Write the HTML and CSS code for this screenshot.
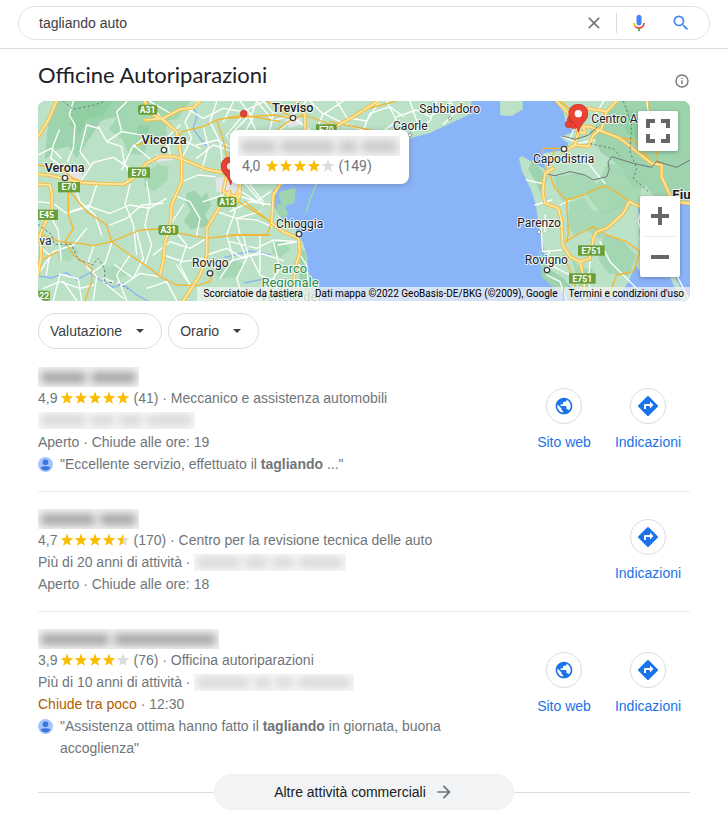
FILE: index.html
```html
<!DOCTYPE html>
<html lang="it">
<head>
<meta charset="utf-8">
<meta name="viewport" content="width=device-width, initial-scale=1">
<title>tagliando auto</title>
<link rel="stylesheet" href="styles.css">
</head>
<body>
<svg class="sprite" aria-hidden="true">
  <defs>
    <linearGradient id="half"><stop offset=".5" stop-color="#fbbc04"/><stop offset=".5" stop-color="#dadce0"/></linearGradient>
    <symbol id="star" viewBox="0 0 24 24"><path d="M12 17.6 18.6 22l-2-7.9L22.6 9l-7.700-.5L12 1 9.100 8.500 1.400 9l6 5.100-2 7.900z"/></symbol>
    <symbol id="globe" viewBox="0 0 24 24"><path d="M12 2C6.480 2 2 6.480 2 12s4.480 10 10 10 10-4.480 10-10S17.520 2 12 2zm-1 17.930c-3.950-.49-7-3.850-7-7.930 0-.62.08-1.210.21-1.790L9 15v1c0 1.100.9 2 2 2v1.930zm6.900-2.540c-.26-.81-1-1.390-1.900-1.390h-1v-3c0-.55-.45-1-1-1H8v-2h2c.55 0 1-.45 1-1V7h2c1.100 0 2-.9 2-2v-.41c2.930 1.190 5 4.060 5 7.410 0 2.080-.8 3.970-2.100 5.390z"/></symbol>
    <symbol id="directions" viewBox="0 0 24 24"><path d="M21.710 11.290l-9-9a.996.996 0 0 0-1.410 0l-9 9a.996.996 0 0 0 0 1.410l9 9c.39.39 1.020.39 1.410 0l9-9a.996.996 0 0 0 0-1.410zM14 14.500V12h-4v3H8v-4c0-.55.45-1 1-1h5V7.500l3.500 3.500-3.500 3.500z"/></symbol>
    <symbol id="person" viewBox="0 0 16 16"><circle cx="8" cy="8" r="8" fill="#a6c5fa"/><circle cx="8" cy="5.600" r="3" fill="#3b74e0"/><path d="M2.500 11.300Q4.800 9.800 8 9.800t5.500 1.500Q11.500 14.300 8 14.300t-5.500-3z" fill="#3b74e0"/></symbol>
    <symbol id="pin" viewBox="0 0 60 86"><path d="M30 1C13 1 1 13 1 30c0 21 24 27 29 55 5-28 29-34 29-55C59 13 47 1 30 1z" fill="#ea4335" stroke="#c5221f" stroke-width="2"/><circle cx="30" cy="29" r="11" fill="#fff"/></symbol>
  </defs>
</svg>

<header class="topbar">
  <form class="search" role="search">
    <input class="search-input" type="text" value="tagliando auto" aria-label="Cerca">
    <button class="icon-button" type="button" aria-label="Cancella"><svg viewBox="0 0 24 24" width="20" height="20" fill="#70757a"><path d="M19 6.410L17.590 5 12 10.590 6.410 5 5 6.410 10.590 12 5 17.590 6.410 19 12 13.410 17.590 19 19 17.590 13.410 12z"/></svg></button>
    <span class="search-divider"></span>
    <button class="icon-button" type="button" aria-label="Ricerca vocale"><svg viewBox="0 0 24 24" width="20" height="20"><path fill="#4285f4" d="M12 15c1.700 0 3-1.300 3-3V5c0-1.700-1.300-3-3-3S9 3.300 9 5v7c0 1.700 1.300 3 3 3z"/><path fill="#34a853" d="M11 18.100h2V22h-2z"/><path fill="#fbbc04" d="M7 12H5c0 1.900.8 3.600 2 4.900l1.500-1.400C7.600 14.600 7 13.400 7 12z"/><path fill="#ea4335" d="M12 17c-1.400 0-2.600-.6-3.500-1.500L7 16.900C8.300 18.200 10 19 12 19c3.900 0 7-3.100 7-7h-2c0 2.800-2.200 5-5 5z"/></svg></button>
    <button class="icon-button" type="submit" aria-label="Cerca"><svg viewBox="0 0 24 24" width="20" height="20" fill="#4285f4"><path d="M15.500 14h-.79l-.28-.27A6.470 6.470 0 0 0 16 9.500 6.500 6.500 0 1 0 9.500 16c1.610 0 3.090-.59 4.230-1.570l.27.28v.79l5 4.990L20.490 19l-4.990-5zm-6 0C7.010 14 5 11.990 5 9.500S7.010 5 9.500 5 14 7.010 14 9.500 11.990 14 9.500 14z"/></svg></button>
  </form>
</header>

<main class="page">
  <div class="heading">
    <h1>Officine Autoriparazioni</h1>
    <button class="info" type="button" aria-label="Informazioni"><svg viewBox="0 0 24 24" width="16" height="16" fill="#70757a"><path d="M11 7h2v2h-2zm0 4h2v6h-2zm1-9a10 10 0 1 0 0 20 10 10 0 0 0 0-20zm0 18a8 8 0 1 1 0-16 8 8 0 0 1 0 16z"/></svg></button>
  </div>

  <section class="map" aria-label="Mappa">
    <svg class="map-canvas" viewBox="0 0 1956 600" preserveAspectRatio="xMidYMid slice">
      <rect width="1956" height="600" fill="#8ab4f8"/>
      <g fill="#bbe2c6">
        <path d="M0 0H1300L1296 40 1240 66 1176 96 1116 112 1000 160 860 220 836 250 800 330 780 350 775 390 795 425 808 470 806 505 840 555 828 600H0z"/>
        <path d="M1386 0h68v25l-32 20-35-2z"/>
        <path d="M1551 0l25 32 10 40 25 20-45 15 25 20-5 20-70 10 5 48-70-40-8 8 10 40 25 50 15 45 10 70 15 65 5 60 60 40 45 42H1740l30-40 26-60h160V0z"/>
      </g>
      <path d="M1801 320L1956 300V600H1746L1776 560 1796 520 1806 440z" fill="#8ab4f8"/>
      <path d="M1906 520l44 80h-20l-34-70zM1801 400l20 0 10 60-20 60-20-30z" fill="#bbe2c6"/>
      <path d="M705 268l80-48 48 28-30 82-14 32-54-5-30-45z" fill="#8ab4f8"/>
      <path d="M725 272l48-12-4 45-34 12-12-25zM716 307l25 7 11 27-20 8-16-14z" fill="#9fd5ae"/>
      <path d="M835 252l-20 45-10 38" stroke="#9fd5ae" stroke-width="5" fill="none"/>
      <g fill="#9ed4ad">
        <path d="M50 0h215l-20 44-55 15-40 60-34 52-26-35-30 8-40 32 10-105z"/>
        <path d="M268 0h190l-40 54-36 6 5 42-50 7-20 52-46-2-18-45-40-28z" opacity=".8"/>
        <path d="M320 218l40-28 32 10-4 38-38 32-32-16z" opacity=".7"/>
        <path d="M446 276l24-8 20 22 16-17 14 40-20 27 20 35-62 10-20-25 20-30-15-29z"/>
        <path d="M702 425l36-5 18 26-28 22-24-9zM530 500l52-32 36 24-20 36-58 6z" opacity=".7"/>
        <path d="M788 440l18 20-4 40 20 34 16 56-28 10-26-70z"/>
        <path d="M1745 0h211v300l-100-5-32-40-36 12-40-70-60-44-34-60z"/>
        <path d="M1470 203l14-26 46 53-22 50-12-31zM1502 440l25 60 54 34 30 66-60-38-40-33z"/>
        <path d="M1547 228l80-12 52 32 30-62 110 18-15 98-50 20-60 20-54-67-60 35-18-30z" opacity=".7"/>
        <path d="M1596 305l44-17 22 42 60-6 30-34 25 30-70 60-20 34-50-30-24 20-27-30z" opacity=".65"/>
        <path d="M1696 400l60 20 40 45-24 60-60-8-30-40zM1600 470l25 30 40 4-10 60-30-10z" opacity=".8"/>
        <path d="M60 440l40-18 22 30-30 30-32-8zM190 500l60-8 20 30-50 20z" opacity=".5"/>
      </g>
      <g fill="#7ec994" opacity=".45"><path d="M105 0h120l-30 44-50 11-20 48-32-35zM300 70l38 5-10 20-34 8zM1765 15l50 40-15 62-38-25z"/></g>
      <g fill="#e3e5e8"><path d="M80 206l46 6 10 20-36 12-22-8zM350 160l55 2-2 16-46 6zM533 230l60-4 22 35-20 40-34-22-26-9zM740 55l46-6 8 20-40 12z"/></g>
      <g fill="none" stroke="#8ab4f8" stroke-width="4">
        <path d="M0 525l40 6 45-16 30 22 40-22 30 22 40 22 30-10 40 32 35 19"/>
        <path d="M465 12l12 35-12 36 25 34 20 20M558 470l80-20 60 12M618 546l70-14M540 475l-60 12"/>
      </g>

      <g class="road-white" transform="translate(-24 -18)">
        <path d="M88 105L70 150 62 190 90 210M130 18L118 60 135 90 130 160 112 200M205 95l25 45 45 15 8 50 22 40M230 140l45-30 70 12M275 110l-15-60 30-30M345 125l-40 35-30 65M24 320l45 5 40 30 70-20 60 20 60-25 60 10 50-30"/>
        <path d="M130 265l20 55 45 40 20 60M200 270l-20 60-60 20M300 268l-15 60 25 60 10 90M350 260l10 60-15 70 20 60-20 60M240 390l50-20 45-40 65-5M170 400l-40 50-60 20-40 60M190 455l-20 60 30 30-10 70M245 445l-20 60-40 30M320 410l20 80-30 60-55-40M300 480l-40 60 30 77M390 545l-60-10-50 35-60-20"/>
        <path d="M455 260l50-20 50 5M455 190l30-60-20-50 35-60M500 150l60-15 50 25M520 95l15 60-20 70M560 20l-20 60 30 60 10 90M610 20l-30 60M640 60l-50 60 20 50M430 300l50 20 30 50-10 50M460 330l-40 60 50 60-20 60 30 60M530 430l-50 30-60-20-50 40M530 480l60-20 50 30 50-20M595 300l20 50-25 70 20 70-40 60M560 350l60 20 70-20M620 420l30 70-30 60 20 60M400 480l60 20 60-10M480 570l-40-60"/>
        <path d="M40 580l50-20 60 20 40-10M70 617l20-80 55 15 10 65M100 560l40 57M24 180l40-20 30 30M24 350l30 0 30 55 10 90M150 262l40-60 60-15 60 40M370 200l-60-50M400 160l50-30 60 30M400 75l-30-35M360 20l70 40M24 450l35 30-10 60M220 560l60 50M350 580l60-20 30 57"/>
        <path d="M470 40l50 30 60-30 60 10 60-30M500 190l50-40 60 20 30-60M620 280l60 40M640 260l60 70M580 300l-60 20M420 180l-10-50 40-40M620 170l60 20M680 20l-20 50 30 60M180 210l-30-40 20-80 35 10"/>
      </g>
      <g class="road-white" transform="translate(576 -18)">
        <path d="M30 18l40 50-30 50M80 18l50 60 60-20 40-40M120 105l10-50-30-37M150 105l40-35 50 35M240 18l40 40 60-40M260 105l20-50 60 30 60 20M320 18l30 50 60 10 40-60M400 105l20-50 60-20 40 30M470 18l30 60-40 30M500 65l60-20 40 20 60-40M540 18l20 60M620 18l-20 60-50 30M660 18l20 30-40 40M0 120l60-60"/>
        <path d="M20 300l60 20 40-30M0 350l60-30 70 10M30 420l-10-50 60 5 45 20M0 440l80 20 50-25 70 5M40 422l15 60 45-5 60 20M0 500l60-20 30 60 50 20M90 422v110M130 440l20 80-40 60M205 440l-60 10M210 480l20 30 5 60M160 520l50-10M60 270l40 50"/>
      </g>
      <g class="road-white" transform="translate(1266 -18)">
        <path d="M310 125l45 20 50-10M200 255l45 10M225 330l50-15M300 330l30-15M243 400l5 70 55-5M375 190l30 40 30 35M255 410l0-50M390 500l-5 60 15 57M420 440l30 60 90 90M560 18l10 60M545 340l-10 40 15 50M260 540l40 20 20 57M330 130l20-50M430 20l-30 50M630 500l55 110M270 470l-20 30 80 40"/>
      </g>

      <g class="road-thin" transform="translate(-24 -18)">
        <path d="M24 415l66 25 60 5 40 7 55-12 85-35 60-3 60 13 80 15 90-10h100M115 290v70l15 40-25 40 25 40 55 40v40l-20 57M245 440l55 40 60 40 30 25 50 25 60 2 40-12 10-30M120 290l50 60 60 40 15 50M320 150l30-8 50-10M455 110l65-15 40-20 80-15 110 20M595 300l45 30 90 55M24 210l66 10 40 30 30 12M455 115l-60 38M560 75l20 60 20 100M600 260l80-20M24 500l60-30"/>
      </g>
      <g class="road-thin" transform="translate(576 -18)">
        <path d="M0 70l60-5 70-5 60 10 35-10 80 30M45 320l80 65-15 35H0M190 70l-80-52M190 70l-50 35M300 80l120 25M395 45l100-25"/>
      </g>
      <g class="road-thin" transform="translate(1266 -18)">
        <path d="M270 240l15 40 35 35 50-15 60-28 30 13 50 35M320 315l5 105-7 20 32-20 50-25 40 25 60 20 40 30-20 60-50 10-30 77M310 480l35 80v57M565 18l10 80 20 100M250 175l0-15 60 0 35-10M285 165l-30 60M300 18l50 40M460 125l60 10 50 60"/>
      </g>
      <g>
        <g class="road-case" transform="translate(-24 -18)">
          <path id="ra" d="M80 18L55 75 24 125M24 238l31 2 95 22 50 3 80 3 30-18 40-45 40-21h40l40 14 60 25 50 10 60 10M24 268l36 2 6 30v40l-21 45-15 35 4 60-10 60M345 18l7 32 48 25 40 35 15 80v70l-30 70-5 70-15 40-5 60-10 40M345 75l55-5 50-27 40-5 20-20M600 290l-40 60-30 50v80l-20 60-50 77M590 240l-10 50 40 15 15-50zM630 240l0 60-15 30"/>
        </g>
        <g class="road-core" transform="translate(-24 -18)"><use href="#ra"/></g>
        <g class="road-case" transform="translate(576 -18)">
          <path id="rb" d="M200 18l25 42v45M445 18l-75 47-80 45M150 268l-20 32-5 85 35 25 45 20 5 40-15 50-5 60"/>
        </g>
        <g class="road-core" transform="translate(576 -18)"><use href="#rb"/></g>
        <g class="road-case" transform="translate(1266 -18)">
          <path id="rc" d="M290 18l40 42 25 50 20 5-5-20 20 0 90 35 50 40 45 35 30 5v35l20 45 15 30 50 5M470 18l-30 32-15 50-25 20-15 35-40-5-35 20M355 110l-10 40M255 235l-7 55 7 35 40 15 10 40 3 70 22 35 30 15 30-10 10-60 10-20 30-10 50-45 18-35 32 15M360 500l12 50 3 67M385 40l55 10M255 235l25-15"/>
        </g>
        <g class="road-core" transform="translate(1266 -18)"><use href="#rc"/></g>
      </g>

      <g fill="none" stroke="#6f7779" stroke-width="3">
        <path d="M1531 220l20 4 45-12 45 10 25 15 40-10 8-22-4-22 11-16 65 20 55 12 15-18 60 18 40-22M1572 105l40 10 38-12 28-25"/>
        <path d="M1756 0l25 72-5 80 20 50-10 30 45 40M1656 128l70 15 20 22M0 370l40 30 10 30 50 0 20 45 45 17 15-20 20 30 0 45 30-4 40 20M75 0l30 25 60-12 40-13" stroke-dasharray="7 7"/>
      </g>

      <g transform="translate(-24 -18)">
        <use href="#pin" x="572" y="185" width="60" height="86"/>
        <circle cx="641" cy="56" r="10" fill="#ea4335" stroke="#c5221f" stroke-width="2"/>
      </g>
      <g transform="translate(1266 -18)">
        <circle cx="332" cy="74" r="10" fill="#ea4335" stroke="#c5221f" stroke-width="2"/>
        <circle cx="326" cy="88" r="10" fill="#ea4335" stroke="#c5221f" stroke-width="2"/>
        <circle cx="341" cy="91" r="10" fill="#ea4335" stroke="#c5221f" stroke-width="2"/>
        <use href="#pin" x="325" y="27" width="60" height="86"/>
      </g>

      <g fill="#fff" stroke="#3c4043" stroke-width="4">
        <circle cx="378" cy="147" r="8"/><circle cx="81" cy="231" r="8"/><circle cx="516" cy="517" r="8"/><circle cx="765" cy="51" r="8"/><circle cx="783" cy="399" r="8"/><circle cx="1578" cy="144" r="8"/><circle cx="1527" cy="507" r="8"/>
      </g>
      <g fill="#fff" stroke="#70757a" stroke-width="2"><circle cx="1116" cy="102" r="5"/><circle cx="1236" cy="52" r="5"/><circle cx="1503" cy="393" r="5"/></g>

      <g fill="#689f38">
        <rect x="300" y="11" width="58" height="30" rx="8"/><rect x="270" y="199" width="66" height="31"/><rect x="60" y="243" width="66" height="31"/><rect x="538" y="288" width="58" height="30" rx="8"/><rect x="361" y="372" width="60" height="30" rx="8"/><rect x="-6" y="326" width="66" height="31"/><rect x="-14" y="569" width="50" height="30" rx="8"/><rect x="834" y="70" width="62" height="31"/><rect x="1620" y="433" width="80" height="31"/><rect x="1593" y="517" width="80" height="31"/>
      </g>
      <g class="shield">
        <text x="329" y="35">A31</text><text x="303" y="224">E70</text><text x="93" y="268">E70</text><text x="567" y="312">A13</text><text x="391" y="396">A31</text><text x="26" y="351">E45</text><text x="10" y="593">A22</text><text x="865" y="95">E70</text><text x="1660" y="458">E751</text><text x="1633" y="542">E751</text>
      </g>
      <g class="city">
        <text x="378" y="128">Vicenza</text><text x="80" y="212">Verona</text><text x="764" y="34">Treviso</text>
      </g>
      <g class="town">
        <text x="517" y="499">Rovigo</text><text x="785" y="380">Chioggia</text><text x="1117" y="86">Caorle</text><text x="1235" y="37">Sabbiadoro</text><text x="1577" y="186">Capodistria</text><text x="1503" y="377">Parenzo</text><text x="1525" y="488">Rovigno</text><text class="from-left" x="1660" y="66">Centro A</text><text class="from-left" x="4" y="431">va</text>
      </g>
      <g class="park"><text x="757" y="516">Parco</text><text x="756" y="558">Regionale</text><text x="756" y="600">Veneto del</text></g>
      <text class="capital from-left" x="1903" y="295">Fiume</text>
    </svg>

    <div class="callout">
      <div class="blurred name-callout" aria-hidden="true"><i class="w-mid"></i><i class="w-long"></i><i class="w-short"></i><i class="w-mid"></i></div>
      <div class="callout-rating"><span>4,0</span><span class="stars"><svg><use href="#star"/></svg><svg><use href="#star"/></svg><svg><use href="#star"/></svg><svg><use href="#star"/></svg><svg class="off"><use href="#star"/></svg></span><span>(149)</span></div>
    </div>
    <button class="map-button fullscreen" type="button" aria-label="Schermo intero"><svg viewBox="0 0 24 24" width="24" height="24" fill="none" stroke="#666" stroke-width="4"><path d="M2 9V2h7M15 2h7v7M22 15v7h-7M9 22H2v-7"/></svg></button>
    <div class="zoom">
      <button class="zoom-button" type="button" aria-label="Zoom avanti"><svg viewBox="0 0 18 18" width="18" height="18" stroke="#666" stroke-width="4"><path d="M0 9h18M9 0v18"/></svg></button>
      <button class="zoom-button" type="button" aria-label="Zoom indietro"><svg viewBox="0 0 18 18" width="18" height="18" stroke="#666" stroke-width="4"><path d="M0 9h18"/></svg></button>
    </div>
    <div class="credits"><button class="credit" type="button">Scorciatoie da tastiera</button><span class="credit credit-data">Dati mappa ©2022 GeoBasis-DE/BKG (©2009), Google</span><a class="credit credit-terms" href="#">Termini e condizioni d'uso</a></div>
  </section>

  <div class="filters">
    <button class="chip" type="button">Valutazione<span class="caret"></span></button>
    <button class="chip" type="button">Orario<span class="caret"></span></button>
  </div>

  <section class="results">
    <article class="entry">
      <div class="details">
        <div class="name"><div class="blurred name-one" aria-hidden="true"><i class="w-mid"></i><i class="w-mid"></i></div></div>
        <div class="row"><span>4,9</span><span class="stars"><svg><use href="#star"/></svg><svg><use href="#star"/></svg><svg><use href="#star"/></svg><svg><use href="#star"/></svg><svg><use href="#star"/></svg></span><span>(41) · Meccanico e assistenza automobili</span></div>
        <div class="row"><div class="blurred faint address-full" aria-hidden="true"><i class="w-mid"></i><i class="w-short"></i><i class="w-short"></i><i class="w-mid"></i></div></div>
        <div class="row">Aperto · Chiude alle ore: 19</div>
        <div class="review"><svg class="avatar"><use href="#person"/></svg><span>"Eccellente servizio, effettuato il <b>tagliando</b> ..."</span></div>
      </div>
      <div class="actions">
        <a class="action" href="#"><span class="disc"><svg><use href="#globe"/></svg></span>Sito web</a>
        <a class="action" href="#"><span class="disc"><svg class="large"><use href="#directions"/></svg></span>Indicazioni</a>
      </div>
    </article>
    <article class="entry">
      <div class="details">
        <div class="name"><div class="blurred name-two" aria-hidden="true"><i class="w-long"></i><i class="w-mid"></i></div></div>
        <div class="row"><span>4,7</span><span class="stars"><svg><use href="#star"/></svg><svg><use href="#star"/></svg><svg><use href="#star"/></svg><svg><use href="#star"/></svg><svg class="half"><use href="#star"/></svg></span><span>(170) · Centro per la revisione tecnica delle auto</span></div>
        <div class="row"><span>Più di 20 anni di attività ·</span><div class="blurred faint address-two" aria-hidden="true"><i class="w-mid"></i><i class="w-short"></i><i class="w-short"></i><i class="w-mid"></i></div></div>
        <div class="row">Aperto · Chiude alle ore: 18</div>
      </div>
      <div class="actions">
        <a class="action" href="#"><span class="disc"><svg class="large"><use href="#directions"/></svg></span>Indicazioni</a>
      </div>
    </article>
    <article class="entry entry-tall">
      <div class="details">
        <div class="name"><div class="blurred name-three" aria-hidden="true"><i class="w-mid"></i><i class="w-long"></i></div></div>
        <div class="row"><span>3,9</span><span class="stars"><svg><use href="#star"/></svg><svg><use href="#star"/></svg><svg><use href="#star"/></svg><svg><use href="#star"/></svg><svg class="off"><use href="#star"/></svg></span><span>(76) · Officina autoriparazioni</span></div>
        <div class="row"><span>Più di 10 anni di attività ·</span><div class="blurred faint address-three" aria-hidden="true"><i class="w-long"></i><i class="w-short"></i><i class="w-short"></i><i class="w-long"></i></div></div>
        <div class="row"><span><span class="closing">Chiude tra poco</span> · 12:30</span></div>
        <div class="review"><svg class="avatar"><use href="#person"/></svg><span>"Assistenza ottima hanno fatto il <b>tagliando</b> in giornata, buona accoglienza"</span></div>
      </div>
      <div class="actions">
        <a class="action" href="#"><span class="disc"><svg><use href="#globe"/></svg></span>Sito web</a>
        <a class="action" href="#"><span class="disc"><svg class="large"><use href="#directions"/></svg></span>Indicazioni</a>
      </div>
    </article>
  </section>

  <div class="more-row">
    <a class="more" href="#">Altre attività commerciali<svg viewBox="0 0 24 24" width="20" height="20" fill="#70757a"><path d="M12 4l-1.410 1.410L16.170 11H4v2h12.170l-5.580 5.590L12 20l8-8z"/></svg></a>
  </div>
</main>
</body>
</html>
```
FILE: styles.css
```css
* {
  box-sizing: border-box;
}

body {
  margin: 0;
  background: #fff;
  color: #70757a;
  font: 14px/22px "Liberation Sans", Arial, sans-serif;
}

button {
  padding: 0;
  border: 0;
  background: none;
  font: inherit;
  color: inherit;
}

a {
  color: inherit;
  text-decoration: none;
}

svg {
  display: block;
}

.sprite {
  position: absolute;
  width: 0;
  height: 0;
}

/* Search bar */
.topbar {
  padding: 6px 18px 8px;
  border-bottom: 1px solid #dadce0;
}

.search {
  display: flex;
  align-items: center;
  height: 34px;
  padding: 0 18px 0 20px;
  border: 1px solid #dfe1e5;
  border-radius: 17px;
}

.search-input {
  flex: 1;
  min-width: 0;
  padding: 0;
  border: 0;
  outline: 0;
  background: none;
  color: #3c4043;
  font: inherit;
}

.icon-button {
  display: grid;
  place-items: center;
  width: 20px;
  height: 20px;
}

.search-divider {
  width: 1px;
  height: 20px;
  margin: 0 12px;
  background: #dadce0;
}

.search-divider + .icon-button {
  margin-right: 22px;
}

/* Heading */
.page {
  padding: 0 38px 4px;
}

.heading {
  display: flex;
  align-items: center;
  justify-content: space-between;
  height: 52px;
}

h1 {
  margin: 0;
  color: #202124;
  font: 22px/28px "Google Sans", Lato, sans-serif;
}

.info {
  padding-top: 12px;
}

/* Map */
.map {
  position: relative;
  height: 200px;
  overflow: hidden;
  border-radius: 8px;
}

.map-canvas {
  width: 100%;
  height: 100%;
}

.road-white,
.road-thin,
.road-case,
.road-core {
  fill: none;
  stroke-linejoin: round;
  stroke-linecap: round;
}

.road-white {
  stroke: #fff;
  stroke-width: 4px;
}

.road-thin {
  stroke: #f5b52d;
  stroke-width: 4px;
}

.road-case {
  stroke: #f5bd45;
  stroke-width: 11px;
}

.road-core {
  stroke: #fde9a8;
  stroke-width: 5px;
}

.map-canvas text {
  font-family: Roboto, sans-serif;
  text-anchor: middle;
}

.map-canvas .from-left {
  text-anchor: start;
}

.map-canvas .city text,
.map-canvas .town text,
.map-canvas .park text,
.map-canvas .capital {
  fill: #202124;
  stroke: #fff;
  stroke-width: 6px;
  stroke-linejoin: round;
  stroke-opacity: .8;
  paint-order: stroke;
}

.map-canvas .city {
  font-size: 38px;
  font-weight: 500;
}

.map-canvas .town {
  font-size: 36px;
}

.map-canvas .park {
  font-size: 39px;
}

.map-canvas .park text {
  fill: #2c8f50;
}

.map-canvas .capital {
  font-size: 40px;
  font-weight: 700;
}

.shield {
  fill: #fff;
  font-size: 26px;
  font-weight: 700;
}

.callout {
  position: absolute;
  top: 29px;
  left: 192px;
  width: 179px;
  height: 54px;
  padding: 6px 8px;
  border-radius: 8px;
  background: #fff;
  box-shadow: 0 1px 6px rgba(60, 64, 67, .3);
}

.callout-rating {
  display: flex;
  align-items: center;
  gap: 4px;
  padding-left: 4px;
  font: 14px/18px Roboto, sans-serif;
}

.map-button,
.zoom {
  position: absolute;
  background: #fff;
  border-radius: 2px;
  box-shadow: 0 1px 4px rgba(0, 0, 0, .3);
}

.fullscreen {
  top: 10px;
  right: 12px;
  display: grid;
  place-items: center;
  width: 40px;
  height: 40px;
}

.zoom {
  top: 95px;
  right: 10px;
  width: 40px;
}

.zoom-button {
  display: grid;
  place-items: center;
  width: 100%;
  height: 40px;
}

.zoom-button + .zoom-button::before {
  content: "";
  width: 30px;
  height: 1px;
  background: #e6e6e6;
}

.zoom-button + .zoom-button {
  grid-template-rows: 1px 1fr;
  height: 41px;
}

.credits {
  position: absolute;
  right: 0;
  bottom: 0;
  display: flex;
  height: 14px;
  padding: 0 6px;
  background: rgba(245, 245, 245, .7);
  color: #000;
  font: 10px/14px Roboto, sans-serif;
}

.credit-data {
  padding: 0 5px 0 12px;
  border-right: 1px solid #b9c3d3;
}

.credit-terms {
  padding-left: 5px;
}

/* Filters */
.filters {
  display: flex;
  gap: 6px;
  margin: 12px 0 16px;
}

.chip {
  display: flex;
  align-items: center;
  gap: 14px;
  height: 36px;
  padding: 0 17px 0 11px;
  border: 1px solid #dadce0;
  border-radius: 18px;
  color: #3c4043;
}

.caret {
  border: 4px solid transparent;
  border-top-color: #3c4043;
  border-bottom: 0;
}

/* Results */
.entry {
  display: flex;
  align-items: center;
  justify-content: space-between;
  padding: 15px 0 16px;
  border-bottom: 1px solid #ebebeb;
}

.entry:first-child {
  padding-top: 0;
}

.entry:last-child {
  padding-bottom: 15px;
  border-bottom: 0;
}

.details {
  flex: 1;
  max-width: 440px;
}

.name {
  display: flex;
  align-items: flex-end;
  height: 22px;
}

.row {
  display: flex;
  align-items: center;
  gap: 3px;
  height: 22px;
}

.stars {
  display: flex;
  fill: #fbbc04;
}

.stars svg {
  width: 14px;
  height: 14px;
}

.stars .off {
  fill: #dadce0;
}

.stars .half {
  fill: url(#half);
}

.review {
  display: flex;
  gap: 7px;
}

.avatar {
  flex: none;
  width: 15px;
  height: 15px;
  margin-top: 4px;
}

.closing {
  color: #b06000;
}

/* Obscured names and addresses */
.blurred {
  display: flex;
  align-items: center;
  gap: 5px;
  height: 20px;
  padding: 0 3px;
  overflow: hidden;
  background: #f3f3f3;
}

.blurred i {
  height: 11px;
  border-radius: 3px;
  background: #a2a2a2;
  filter: blur(4px);
}

.blurred.faint {
  height: 17px;
  background: #f8f8f8;
}

.blurred.faint i {
  background: #d6d8da;
}

.w-short {
  flex: 2;
}

.w-mid {
  flex: 4;
}

.w-long {
  flex: 6;
}

.name-callout {
  width: 162px;
  margin-bottom: 1px;
}

.blurred.name-callout i {
  background: #c6c6c6;
}

.name-one,
.name-two {
  width: 101px;
}

.name-three {
  width: 181px;
}

.address-full {
  width: 157px;
}

.address-two {
  width: 152px;
}

.address-three {
  width: 160px;
}

/* Actions */
.actions {
  display: flex;
}

.entry-tall .actions {
  align-self: flex-start;
  margin-top: 25px;
}

.action {
  display: flex;
  flex-direction: column;
  align-items: center;
  gap: 7px;
  width: 84px;
  color: #1a73e8;
}

.disc {
  display: grid;
  place-items: center;
  width: 36px;
  height: 36px;
  border: 1px solid #dadce0;
  border-radius: 50%;
  fill: #1a73e8;
}

.disc svg {
  width: 20px;
  height: 20px;
}

.disc .large {
  width: 24px;
  height: 24px;
}

/* More link */
.more-row {
  display: flex;
  align-items: center;
}

.more-row::before,
.more-row::after {
  content: "";
  flex: 1;
  height: 1px;
  background: #dadce0;
}

.more {
  display: flex;
  align-items: center;
  justify-content: center;
  gap: 8px;
  width: 300px;
  height: 36px;
  border-radius: 18px;
  background: #f1f3f4;
  color: #202124;
}
```
